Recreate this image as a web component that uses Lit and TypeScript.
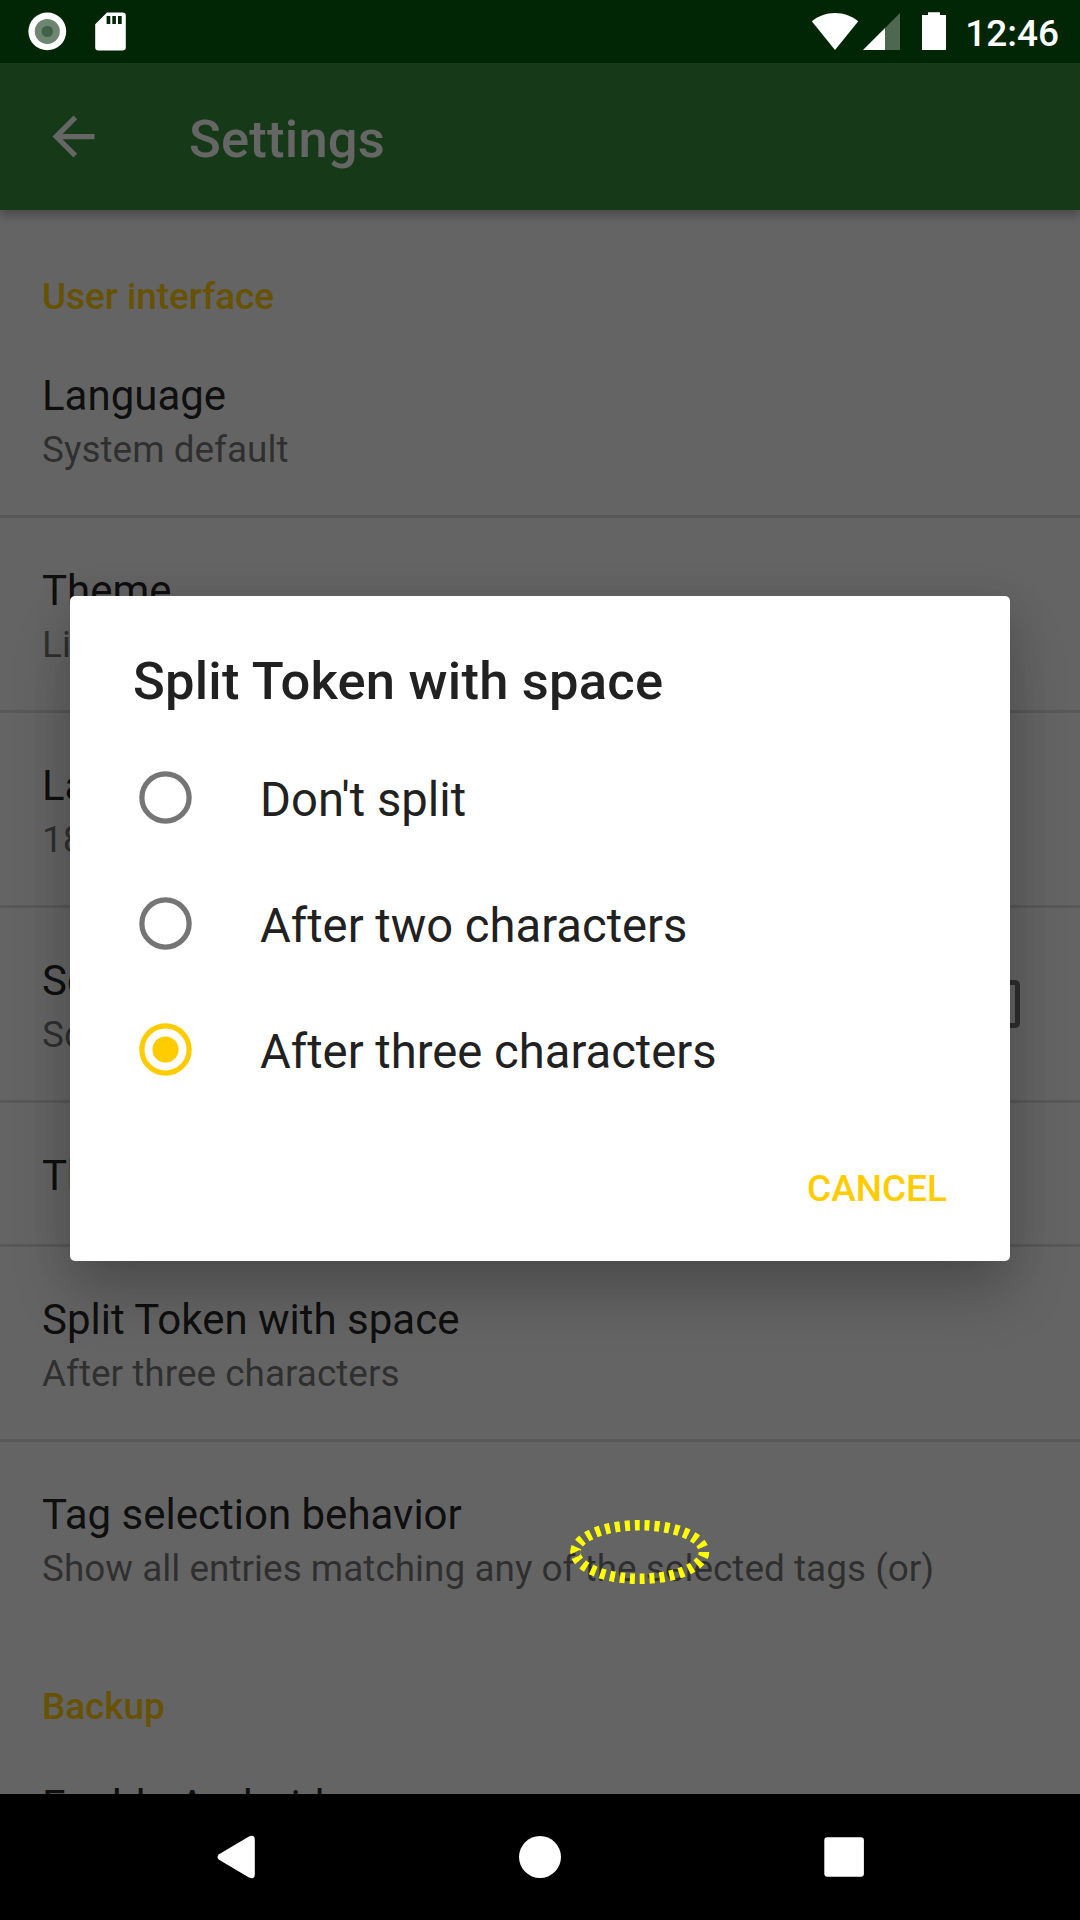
import { LitElement, html, css, svg, nothing } from "lit";
import { customElement, property } from "lit/decorators.js";

interface Setting {
  title: string;
  summary?: string;
  checkbox?: boolean;
  last?: boolean;
}

const INTERFACE_SETTINGS: Setting[] = [
  { title: "Language", summary: "System default" },
  { title: "Theme", summary: "Light" },
  { title: "La", summary: "18" },
  { title: "Sc", summary: "Sc", checkbox: true },
  { title: "Th" },
  { title: "Split Token with space", summary: "After three characters" },
  {
    title: "Tag selection behavior",
    summary: "Show all entries matching any of the selected tags (or)",
    last: true,
  },
];

const OPTIONS = ["Don't split", "After two characters", "After three characters"];

@customElement("status-bar")
export class StatusBar extends LitElement {
  static styles = css`
    :host {
      display: flex;
      justify-content: space-between;
      height: 63px;
      color: #fff;
    }
    svg {
      display: block;
    }
    .right {
      display: flex;
    }
    .time {
      font-size: 37px;
      font-weight: 500;
      line-height: 44px;
      padding-top: 12px;
      padding-right: 21px;
    }
  `;

  render() {
    return html`
      <svg width="140" height="63" viewBox="0 0 140 63">
        <circle cx="47.3" cy="31.4" r="18.9" fill="#fff" />
        <circle cx="47.3" cy="31.4" r="12.5" fill="#6d866f" />
        <circle cx="47.3" cy="31.4" r="5.7" fill="#426146" />
        <path
          fill="#fff"
          fill-rule="evenodd"
          d="M107 12.5h15.6a3.2 3.2 0 0 1 3.2 3.2v31.6a3.2 3.2 0 0 1-3.2 3.2H98.4a3.2 3.2 0 0 1-3.2-3.2V24.2zM106.6 16v8h3.7v-8zM112.3 16v8h3.6v-8zM118 16v8h3.7v-8z"
        />
      </svg>
      <div class="right">
        <svg width="162" height="63" viewBox="803 0 162 63">
          <path fill="#fff" d="M835 50L811.8 21.3C818 16.200 826 13 835 13s17 3.200 23.300 8.300z" />
          <path fill="#fff" fill-opacity=".3" d="M885 28L900 13V50H885z" />
          <path fill="#fff" d="M863 50L885 28V50z" />
          <path fill="#fff" d="M928 12.200h12V15h6V50H922V15h6z" />
        </svg>
        <span class="time">12:46</span>
      </div>
    `;
  }
}

@customElement("setting-row")
export class SettingRow extends LitElement {
  static styles = css`
    :host {
      display: block;
    }
    .row {
      display: flex;
      justify-content: space-between;
      padding: 48px 60px 44px 42px;
      border-bottom: 3px solid rgba(0, 0, 0, 0.12);
    }
    .row.last {
      border-bottom: none;
    }
    .title {
      font-size: 42px;
      line-height: 49px;
      color: rgba(0, 0, 0, 0.87);
    }
    .summary {
      margin-top: 8px;
      font-size: 36.95px;
      line-height: 43px;
      color: rgba(0, 0, 0, 0.54);
    }
    .box {
      box-sizing: border-box;
      width: 48px;
      height: 48px;
      margin-top: 24px;
      border: 5px solid rgba(0, 0, 0, 0.54);
      border-radius: 5px;
    }
  `;

  @property({ attribute: false }) setting!: Setting;

  render() {
    const s = this.setting;
    return html`
      <div class="row ${s.last ? "last" : ""}">
        <div>
          <div class="title">${s.title}</div>
          ${s.summary ? html`<div class="summary">${s.summary}</div>` : nothing}
        </div>
        ${s.checkbox ? html`<div class="box"></div>` : nothing}
      </div>
    `;
  }
}

@customElement("choice-dialog")
export class ChoiceDialog extends LitElement {
  static styles = css`
    :host {
      display: flex;
      flex-direction: column;
      box-sizing: border-box;
      width: 940px;
      height: 665px;
      padding: 54px 63px 0;
      border-radius: 5px;
      background: #fff;
      color: #212121;
      box-shadow: 0 34px 60px rgba(0, 0, 0, 0.2), 0 4px 40px rgba(0, 0, 0, 0.1);
    }
    .heading {
      font-size: 52.5px;
      font-weight: 500;
      line-height: 62px;
      letter-spacing: 0.23px;
      margin-bottom: 22.5px;
    }
    .option {
      display: flex;
      align-items: center;
      height: 126px;
      font-size: 47.2px;
      line-height: 56px;
    }
    .option svg {
      display: block;
      margin-left: 0.5px;
      margin-right: 63.5px;
    }
    .label {
      padding-top: 5px;
    }
    .cancel {
      align-self: flex-end;
      margin-top: 54.5px;
      font-size: 37px;
      font-weight: 500;
      line-height: 43px;
      color: #ffcc00;
    }
  `;

  @property({ type: Number }) selected = 2;

  render() {
    return html`
      <div class="heading">Split Token with space</div>
      ${OPTIONS.map((label, i) => {
        const on = i === this.selected;
        const color = on ? "#ffcc00" : "#757575";
        return html`
          <div class="option">
            <svg width="63" height="63" viewBox="0 0 24 24">
              <circle cx="12" cy="12" r="9" fill="none" stroke=${color} stroke-width="2" />
              ${on ? svg`<circle cx="12" cy="12" r="5" fill=${color} />` : nothing}
            </svg>
            <span class="label">${label}</span>
          </div>
        `;
      })}
      <div class="cancel">CANCEL</div>
    `;
  }
}

@customElement("app-root")
export class AppRoot extends LitElement {
  static styles = css`
    :host {
      display: block;
      position: relative;
      width: 1080px;
      height: 1920px;
      overflow: hidden;
      background: #fafafa;
      font-family: Roboto, "Liberation Sans", sans-serif;
    }
    .page {
      display: flex;
      flex-direction: column;
      height: 1794px;
      overflow: hidden;
      isolation: isolate;
    }
    .status-fill {
      flex: none;
      height: 63px;
      background: #00600f;
      z-index: 1;
    }
    .app-bar {
      flex: none;
      display: flex;
      align-items: center;
      box-sizing: border-box;
      height: 147px;
      padding-left: 42px;
      background: #388e3c;
      box-shadow: 0 5px 10px rgba(0, 0, 0, 0.3);
      color: #fff;
      z-index: 1;
    }
    .app-bar svg {
      display: block;
      margin-right: 84px;
    }
    .page-title {
      font-size: 52.5px;
      font-weight: 500;
      line-height: 62px;
      letter-spacing: 0.23px;
      padding-top: 5px;
    }
    .list {
      padding-top: 14px;
    }
    .section {
      height: 99px;
      box-sizing: border-box;
      padding: 51px 42px 0;
      font-size: 36.85px;
      font-weight: 500;
      line-height: 43px;
      color: #ffcc00;
    }
    .nav {
      display: flex;
      height: 126px;
      background: #000;
    }
    .nav svg {
      display: block;
    }
    .mark {
      position: absolute;
      left: 560px;
      top: 1510px;
    }
    .scrim {
      position: absolute;
      left: 0;
      top: 0;
      width: 1080px;
      height: 1794px;
      background: rgba(0, 0, 0, 0.6);
      display: flex;
      flex-direction: column;
      align-items: center;
    }
    status-bar {
      width: 100%;
    }
    choice-dialog {
      margin-top: 533px;
    }
  `;

  render() {
    return html`
      <div class="page">
        <div class="status-fill"></div>
        <div class="app-bar">
          <svg width="63" height="63" viewBox="0 0 24 24" fill="#fff">
            <path d="M20 11H7.830l5.590-5.590L12 4l-8 8 8 8 1.410-1.410L7.830 13H20v-2z" />
          </svg>
          <span class="page-title">Settings</span>
        </div>
        <div class="list">
          <div class="section">User interface</div>
          ${INTERFACE_SETTINGS.map((s) => html`<setting-row .setting=${s}></setting-row>`)}
          <div class="section">Backup</div>
          <setting-row .setting=${{ title: "Enable Android" }}></setting-row>
        </div>
      </div>
      <div class="nav">
        <svg width="1080" height="126" viewBox="0 0 1080 126" fill="#fff">
          <path
            d="M219 60.200L249 42.600Q254.800 40 254.800 46V80Q254.800 86 249 83.400L219 65.800Q216 63 219 60.200z"
          />
          <circle cx="540" cy="63" r="21" />
          <rect x="824.3" y="43.200" width="39.600" height="39.600" rx="3" />
        </svg>
      </div>
      <div class="scrim">
        <status-bar></status-bar>
        <choice-dialog></choice-dialog>
      </div>
      <svg class="mark" width="160" height="84" viewBox="560 1510 160 84">
        <path
          d="M704 1552A64.3 26.8 0 0 1 575.4 1552A64.3 26.8 0 0 1 704 1552"
          fill="none"
          stroke="#ffff00"
          stroke-width="10.5"
          stroke-dasharray="5 5"
          pathLength="300"
        />
      </svg>
    `;
  }
}
